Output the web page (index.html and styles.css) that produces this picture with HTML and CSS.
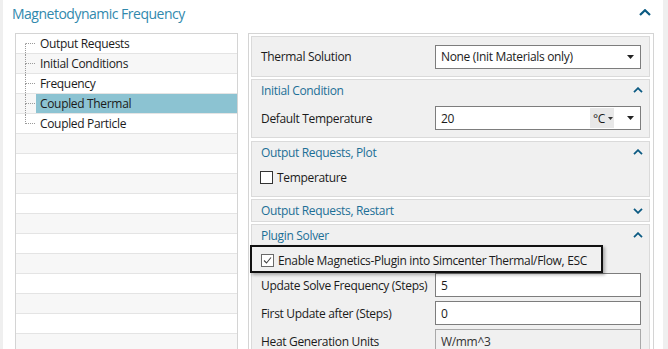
FILE: index.html
```html
<!DOCTYPE html>
<html>
<head>
<meta charset="utf-8">
<link rel="stylesheet" href="styles.css">
</head>
<body>
<div class="screen">
  <div class="strip-left"></div>
  <div class="content">
    <div class="titlebar">
      <span class="title">Magnetodynamic Frequency</span>
      <svg class="chev-big" width="12" height="7" viewBox="0 0 12 7"><polyline points="1,6 6,1.2 11,6" fill="none" stroke="#0b5a82" stroke-width="2.2"/></svg>
    </div>
    <div class="main">
      <div class="tree">
        <div class="row"><div class="conn first"><span class="top"></span><span class="bot"></span></div><div class="lbl">Output Requests</div></div>
        <div class="row"><div class="conn"><span class="top"></span><span class="bot"></span></div><div class="lbl">Initial Conditions</div></div>
        <div class="row"><div class="conn"><span class="top"></span><span class="bot"></span></div><div class="lbl">Frequency</div></div>
        <div class="row"><div class="conn"><span class="top"></span><span class="bot"></span></div><div class="lbl sel">Coupled Thermal</div></div>
        <div class="row"><div class="conn last"><span class="top"></span><span class="bot"></span></div><div class="lbl">Coupled Particle</div></div>
        <div class="row"></div>
        <div class="row"></div>
        <div class="row"></div>
        <div class="row"></div>
        <div class="row"></div>
        <div class="row"></div>
        <div class="row"></div>
        <div class="row"></div>
        <div class="row"></div>
        <div class="row"></div>
        <div class="row"></div>
      </div>
      <div class="props">
        <div class="sec s1">
          <div class="field tall">
            <span class="flabel">Thermal Solution</span>
            <div class="select"><span>None (Init Materials only)</span><svg width="7" height="4" viewBox="0 0 7 4"><path d="M0 0H7L3.5 4Z" fill="#222"/></svg></div>
          </div>
        </div>
        <div class="sec s2">
          <div class="sec-head"><span>Initial Condition</span><svg class="chev" width="10" height="6" viewBox="0 0 10 6"><polyline points="1,5.2 5,1.2 9,5.2" fill="none" stroke="#0b5a82" stroke-width="1.8"/></svg></div>
          <div class="sec-body s2body">
            <div class="field">
              <span class="flabel">Default Temperature</span>
              <div class="select"><span>20</span><span class="unitwrap"><span class="unit">°C <svg width="5" height="3" viewBox="0 0 5 3"><path d="M0 0H5L2.5 3Z" fill="#333"/></svg></span><svg width="7" height="4" viewBox="0 0 7 4"><path d="M0 0H7L3.5 4Z" fill="#222"/></svg></span></div>
            </div>
          </div>
        </div>
        <div class="sec s3">
          <div class="sec-head"><span>Output Requests, Plot</span><svg class="chev" width="10" height="6" viewBox="0 0 10 6"><polyline points="1,5.2 5,1.2 9,5.2" fill="none" stroke="#0b5a82" stroke-width="1.8"/></svg></div>
          <div class="sec-body s3body">
            <div class="check-row"><span class="cb dark"></span><span>Temperature</span></div>
          </div>
        </div>
        <div class="sec s4">
          <div class="sec-head h21"><span>Output Requests, Restart</span><svg class="chev" width="10" height="6" viewBox="0 0 10 6"><polyline points="1,0.8 5,4.8 9,0.8" fill="none" stroke="#0b5a82" stroke-width="1.8"/></svg></div>
        </div>
        <div class="sec s5">
          <div class="sec-head"><span>Plugin Solver</span><svg class="chev" width="10" height="6" viewBox="0 0 10 6"><polyline points="1,5.2 5,1.2 9,5.2" fill="none" stroke="#0b5a82" stroke-width="1.8"/></svg></div>
          <div class="hl"><span class="cb"><svg width="11" height="11" viewBox="0 0 11 11"><polyline points="2,5.5 4.5,8 9,2.5" fill="none" stroke="#444" stroke-width="1.1"/></svg></span><span>Enable Magnetics-Plugin into Simcenter Thermal/Flow, ESC</span></div>
          <div class="field f5">
            <span class="flabel">Update Solve Frequency (Steps)</span>
            <div class="select"><span>5</span></div>
          </div>
          <div class="field f5">
            <span class="flabel">First Update after (Steps)</span>
            <div class="select"><span>0</span></div>
          </div>
          <div class="field f5">
            <span class="flabel">Heat Generation Units</span>
            <div class="select disabled"><span>W/mm^3</span></div>
          </div>
        </div>
      </div>
    </div>
  </div>
  <div class="strip-right"></div>
</div>
</body>
</html>
```

FILE: styles.css
```css
html, body {
  margin: 0;
  padding: 0;
}
body {
  width: 668px;
  height: 349px;
  overflow: hidden;
  background: #ffffff;
  font-family: "Open Sans", "Noto Sans", sans-serif;
  font-size: 12px;
  letter-spacing: -0.33px;
  color: #1b1b1b;
}
.screen {
  display: flex;
  height: 349px;
}
.strip-left {
  width: 3px;
  flex: none;
  background: #efefef;
}
.strip-right {
  width: 5px;
  flex: none;
  margin-left: 9px;
  background: #efefef;
}
.content {
  width: 651px;
  flex: none;
  display: flex;
  flex-direction: column;
}
.titlebar {
  height: 26px;
  display: flex;
  align-items: center;
  justify-content: space-between;
  padding: 0 3px 0 9px;
}
.title {
  font-size: 14px;
  letter-spacing: -0.5px;
  color: #3189ad;
}
.chev-big {
  margin-top: -2px;
}
.main {
  display: flex;
  gap: 10px;
  padding-left: 12px;
  margin-top: 7px;
  flex: 1;
  min-height: 0;
}
.tree {
  width: 223px;
  flex: none;
  box-sizing: border-box;
  border: 1px solid #d4d4d4;
  border-bottom: none;
  background: #fff;
  overflow: hidden;
}
.row {
  height: 20px;
  box-sizing: border-box;
  border-bottom: 1px solid #e4e4e4;
  display: flex;
}
.row:nth-child(even) {
  background: #f7f7f7;
}
.conn {
  width: 20px;
  flex: none;
  display: flex;
  flex-direction: column;
}
.conn .top {
  display: block;
  margin-left: 9px;
  width: 9px;
  height: 9px;
  border-left: 1px dotted #9a9a9a;
  border-bottom: 1px dotted #9a9a9a;
}
.conn .bot {
  display: block;
  margin-left: 9px;
  height: 9px;
  border-left: 1px dotted #9a9a9a;
}
.conn.first .top {
  border-left-color: transparent;
}
.conn.last .bot {
  border-left-color: transparent;
}
.lbl {
  flex: 1;
  padding-left: 4px;
  line-height: 19px;
}
.lbl.sel {
  background: #8cc3d2;
}
.props {
  width: 406px;
  flex: none;
  box-sizing: border-box;
  border: 1px solid #d4d4d4;
  border-bottom: none;
  padding: 2px 3px 0 2px;
  display: flex;
  flex-direction: column;
  gap: 2px;
}
.sec {
  background: #f0f0f0;
  border: 1px solid #dadada;
}
.s2 {
  margin-bottom: 1px;
}
.sec-head {
  height: 20px;
  display: flex;
  align-items: center;
  justify-content: space-between;
  padding: 0 6px 0 9px;
  color: #1c6f96;
}
.sec-head.h21 {
  height: 21px;
}
.field {
  display: grid;
  grid-template-columns: 1fr 206px;
  align-items: center;
  padding: 0 8px 0 9px;
  height: 24px;
}
.field.tall {
  height: 39px;
}
.s2body {
  padding: 6px 0 7px;
}
.s3body {
  padding: 5px 9px 9px;
}
.select {
  height: 24px;
  box-sizing: border-box;
  border: 1px solid #7d7d7d;
  background: #fff;
  display: flex;
  align-items: center;
  justify-content: space-between;
  padding: 0 6px 0 5px;
}
.select.disabled {
  background: #f0f0f0;
  border-color: #a9a9a9;
  color: #333;
}
.unitwrap {
  display: flex;
  align-items: center;
  gap: 13px;
}
.unit {
  display: flex;
  align-items: center;
  gap: 3px;
  height: 20px;
  width: 24px;
  box-sizing: border-box;
  padding-left: 3px;
  background: #e8e8e8;
}
.check-row {
  height: 20px;
  display: flex;
  align-items: center;
  gap: 4px;
}
.cb {
  width: 13px;
  height: 13px;
  box-sizing: border-box;
  border: 1px solid #6a6a6a;
  background: #fff;
  display: flex;
  align-items: center;
  justify-content: center;
  flex: none;
}
.cb.dark {
  border-color: #333;
  margin-left: -1px;
}
.hl {
  width: 353px;
  height: 28px;
  box-sizing: border-box;
  margin-left: -2px;
  border: 2px solid #111;
  padding: 2px 0 0 9px;
  display: flex;
  align-items: center;
  gap: 4px;
  background: #f0f0f0;
  box-shadow: 2px 2px 3px rgba(0, 0, 0, 0.3);
  position: relative;
}
.f5 + .f5 {
  margin-top: 4px;
}
```
